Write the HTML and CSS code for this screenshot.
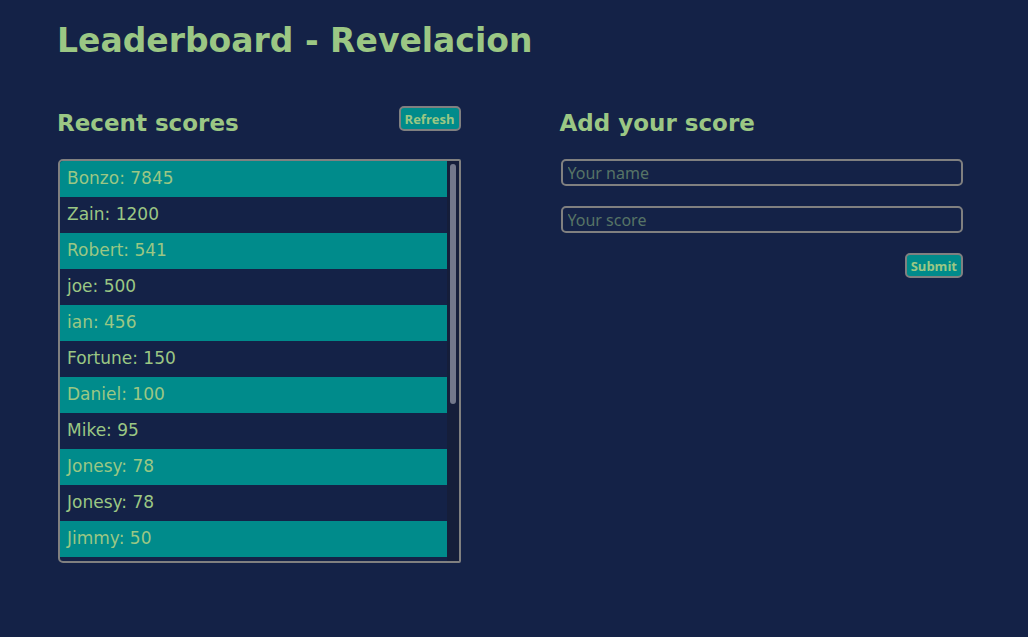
FILE: index.html
```html
<!DOCTYPE html>
<html lang="en">
<head>
<meta charset="utf-8">
<meta name="viewport" content="width=device-width, initial-scale=1">
<title>Leaderboard</title>
<link rel="stylesheet" href="styles.css">
</head>
<body>
<header class="page-header"><h1 class="title">Leaderboard - Revelacion</h1></header>
<main class="columns">
  <section class="scores">
    <div class="section-head">
      <h2 class="subtitle">Recent scores</h2>
      <button class="btn" type="button">Refresh</button>
    </div>
    <div class="score-box">
      <ul class="score-list">
        <li>Bonzo: 7845</li>
        <li>Zain: 1200</li>
        <li>Robert: 541</li>
        <li>joe: 500</li>
        <li>ian: 456</li>
        <li>Fortune: 150</li>
        <li>Daniel: 100</li>
        <li>Mike: 95</li>
        <li>Jonesy: 78</li>
        <li>Jonesy: 78</li>
        <li>Jimmy: 50</li>
      </ul>
      <div class="scroll-track" aria-hidden="true"><div class="scroll-thumb"></div></div>
    </div>
  </section>
  <section class="add">
    <div class="section-head">
      <h2 class="subtitle">Add your score</h2>
    </div>
    <form class="score-form">
      <input class="field" type="text" placeholder="Your name" aria-label="Your name">
      <input class="field" type="text" placeholder="Your score" aria-label="Your score">
      <button class="btn" type="button">Submit</button>
    </form>
  </section>
</main>
</body>
</html>
```
FILE: styles.css
```css
* { box-sizing: border-box; }
body {
  margin: 0;
  padding: 17px 65px 32px 57px;
  background: #142247;
  color: #9bc784;
  font-family: "DejaVu Sans", sans-serif;
}
.title, .subtitle { margin: 0; font-weight: 700; white-space: nowrap; }
.title { font-size: 33px; line-height: 48px; }
.subtitle { font-size: 23px; line-height: 34px; }
.columns {
  display: grid;
  grid-template-columns: 1fr 1fr;
  column-gap: 99px;
  margin-top: 41px;
}
.section-head {
  display: flex;
  justify-content: space-between;
  align-items: flex-start;
  height: 53px;
}
.btn {
  height: 25px;
  padding: 0 4px;
  border: 2px solid #808080;
  border-radius: 5px;
  background: #008b8b;
  color: #9bc784;
  font: 700 13px/20px "Open Sans", sans-serif;
}
.score-box {
  display: flex;
  height: 404px;
  margin-left: 1px;
  overflow: hidden;
  border: 2px solid #808080;
  border-radius: 5px 2px 2px 5px;
}
.scroll-track {
  flex: none;
  width: 12px;
  padding: 3px;
  background: #151e3a;
}
.scroll-thumb {
  height: 61%;
  border-radius: 3px;
  background: #73788b;
}
.score-list {
  flex: 1;
  margin: 0;
  padding: 0;
  list-style: none;
  font-size: 17px;
  line-height: 34px;
}
.score-list li { height: 36px; padding: 0 7px; }
.score-list li:nth-child(odd) { background: #008b8b; }
.score-form {
  display: flex;
  flex-direction: column;
  align-items: flex-end;
  gap: 20px;
  margin-left: 1px;
}
.field {
  width: 100%;
  height: 27px;
  padding: 0 5px;
  border: 2px solid #808080;
  border-radius: 5px;
  background: transparent;
  color: #9bc784;
  font: 16px/22px "Noto Sans", sans-serif;
}
.field::placeholder { color: #577466; opacity: 1; }
```
